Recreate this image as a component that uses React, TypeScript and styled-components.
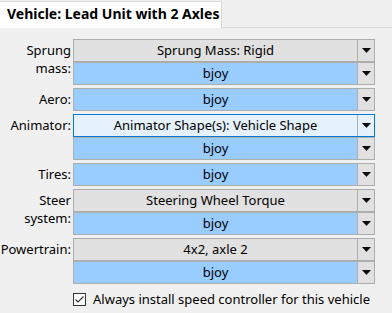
import React from "react";
import styled, { createGlobalStyle } from "styled-components";

const GlobalStyle = createGlobalStyle`
  html, body {
    margin: 0;
    padding: 0;
    background: #f0f0f0;
  }
  body {
    font-family: "Noto Sans", "Segoe UI", sans-serif;
    font-size: 13px;
    color: #000;
  }
`;

const Window = styled.div`
  width: 392px;
  height: 313px;
  display: flex;
  flex-direction: column;
  background: #f0f0f0;
  overflow: hidden;
`;

const TabStrip = styled.div`
  height: 28px;
  padding-top: 2px;
  box-sizing: border-box;
  background: #f0f0f0;
  border-bottom: 1px solid #d9d9d9;
  display: flex;
  align-items: flex-end;
`;

const Tab = styled.div`
  width: 222px;
  height: 27px;
  box-sizing: border-box;
  background: #fff;
  border: 1px solid #d9d9d9;
  border-left: none;
  border-bottom: none;
  margin-bottom: -1px;
  padding-left: 7px;
  font-weight: 700;
  font-size: 14px;
  line-height: 24px;
  white-space: nowrap;
`;

const Panel = styled.div`
  flex: 1;
  padding-top: 11px;
  display: flex;
  flex-direction: column;
`;

const Form = styled.div`
  display: grid;
  grid-template-columns: 71px 302px;
  column-gap: 2px;
  row-gap: 3px;
`;

const Label = styled.div`
  text-align: right;
  line-height: 18px;
  padding-top: 2px;
  white-space: nowrap;
`;

const Stack = styled.div`
  display: flex;
  flex-direction: column;
`;

const Combo = styled.div<{ $variant: "gray" | "blue" | "focus" }>`
  height: 23px;
  box-sizing: border-box;
  display: flex;
  border: 1px solid ${(p) => (p.$variant === "focus" ? "#0078d7" : "#adadad")};
  background: ${(p) => (p.$variant === "focus" ? "#e5f1fb" : "#e1e1e1")};
`;

const ComboText = styled.div<{ $variant: "gray" | "blue" | "focus" }>`
  flex: 1;
  text-align: center;
  line-height: 21px;
  white-space: nowrap;
  background: ${(p) => (p.$variant === "blue" ? "#99ccff" : "transparent")};
  border-right: 1px solid #adadad;
`;

const DropButton = styled.div`
  width: 16px;
  display: flex;
  align-items: center;
  justify-content: center;
`;

const CheckRow = styled.label`
  display: flex;
  align-items: center;
  gap: 7px;
  margin-top: 6px;
  margin-left: 73px;
  line-height: 18px;
  white-space: nowrap;
`;

const CheckBox = styled.span`
  width: 13px;
  height: 13px;
  box-sizing: border-box;
  border: 1px solid #333;
  background: #fff;
  display: flex;
  align-items: center;
  justify-content: center;
`;

const Arrow = () => (
  <svg width="9" height="5" viewBox="0 0 9 5">
    <defs>
      <linearGradient id="ag" x1="0" y1="0" x2="1" y2="1">
        <stop offset="0" stopColor="#000" />
        <stop offset="0.6" stopColor="#111" />
        <stop offset="1" stopColor="#777" />
      </linearGradient>
    </defs>
    <polygon points="0,0 9,0 4.5,5" fill="url(#ag)" />
  </svg>
);

type Variant = "gray" | "blue" | "focus";

const ComboBox = ({ text, variant }: { text: string; variant: Variant }) => (
  <Combo $variant={variant}>
    <ComboText $variant={variant}>{text}</ComboText>
    <DropButton>
      <Arrow />
    </DropButton>
  </Combo>
);

const groups: { label: string[]; combos: { text: string; variant: Variant }[] }[] = [
  {
    label: ["Sprung", "mass:"],
    combos: [
      { text: "Sprung Mass: Rigid", variant: "gray" },
      { text: "bjoy", variant: "blue" },
    ],
  },
  { label: ["Aero:"], combos: [{ text: "bjoy", variant: "blue" }] },
  {
    label: ["Animator:"],
    combos: [
      { text: "Animator Shape(s): Vehicle Shape", variant: "focus" },
      { text: "bjoy", variant: "blue" },
    ],
  },
  { label: ["Tires:"], combos: [{ text: "bjoy", variant: "blue" }] },
  {
    label: ["Steer", "system:"],
    combos: [
      { text: "Steering Wheel Torque", variant: "gray" },
      { text: "bjoy", variant: "blue" },
    ],
  },
  {
    label: ["Powertrain:"],
    combos: [
      { text: "4x2, axle 2", variant: "gray" },
      { text: "bjoy", variant: "blue" },
    ],
  },
];

export default function App() {
  return (
    <>
      <GlobalStyle />
      <Window>
        <TabStrip>
          <Tab>Vehicle: Lead Unit with 2 Axles</Tab>
        </TabStrip>
        <Panel>
          <Form>
            {groups.map((g, i) => (
              <React.Fragment key={i}>
                <Label>
                  {g.label.map((l, j) => (
                    <div key={j}>{l}</div>
                  ))}
                </Label>
                <Stack>
                  {g.combos.map((c, j) => (
                    <ComboBox key={j} text={c.text} variant={c.variant} />
                  ))}
                </Stack>
              </React.Fragment>
            ))}
          </Form>
          <CheckRow>
            <CheckBox>
              <svg width="11" height="11" viewBox="0 0 11 11">
                <polyline points="1.5,5.5 4,8 9.5,2.5" fill="none" stroke="#333" strokeWidth="1.2" />
              </svg>
            </CheckBox>
            Always install speed controller for this vehicle
          </CheckRow>
        </Panel>
      </Window>
    </>
  );
}
